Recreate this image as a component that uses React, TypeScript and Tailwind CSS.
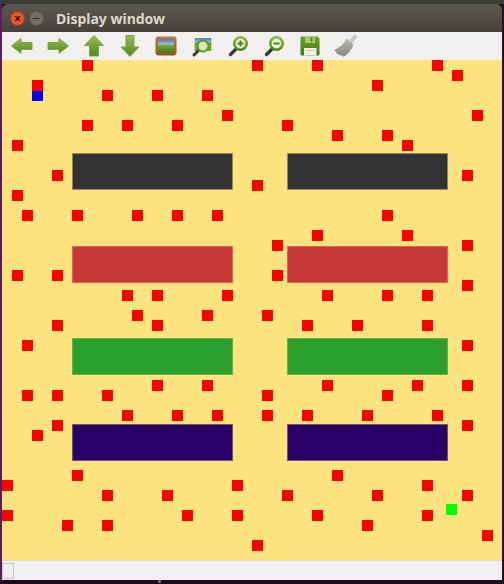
const RED_ROWS: [number, number[]][] = [
  [0, [80, 250, 310, 430]],
  [10, [450]],
  [20, [30, 370]],
  [30, [100, 150, 200]],
  [50, [220, 470]],
  [60, [80, 120, 170, 280]],
  [70, [330, 380]],
  [80, [10, 400]],
  [110, [50, 460]],
  [120, [250]],
  [130, [10]],
  [150, [20, 70, 130, 170, 210, 380]],
  [170, [310, 400]],
  [180, [270, 460]],
  [210, [10, 50, 270]],
  [220, [460]],
  [230, [120, 150, 220, 320, 380, 420]],
  [250, [130, 200, 260]],
  [260, [50, 150, 300, 350, 420]],
  [280, [20, 460]],
  [320, [150, 200, 320, 410, 460]],
  [330, [20, 50, 100, 260, 380]],
  [350, [120, 170, 210, 260, 300, 360, 430]],
  [360, [50, 460]],
  [370, [30]],
  [410, [70, 330]],
  [420, [0, 230, 420]],
  [430, [100, 160, 280, 370, 460]],
  [450, [0, 180, 230, 310, 420]],
  [460, [60, 100, 360]],
  [470, [480]],
  [480, [250]],
];

const BARS = [
  { top: "mt-[93px]", color: "bg-[#333333] border-[#8f8a62]" },
  { top: "mt-[56px]", color: "bg-[#c83737] border-[#d9694f]" },
  { top: "mt-[55px]", color: "bg-[#2ca02c] border-[#6cb048]" },
  { top: "mt-[49px]", color: "bg-[#2a0066] border-[#6a5a72]" },
];

const Grad = ({ id, from, to }: { id: string; from: string; to: string }) => (
  <defs>
    <linearGradient id={id} x1="0" y1="0" x2="0" y2="1">
      <stop offset="0" stopColor={from} />
      <stop offset="1" stopColor={to} />
    </linearGradient>
  </defs>
);

const Arrow = ({ id, d }: { id: string; d: string }) => (
  <svg width="24" height="24" viewBox="0 0 24 24">
    <Grad id={id} from="#9cba5c" to="#4f8a10" />
    <path d={d} fill={`url(#${id})`} stroke="#7ba545" strokeWidth="1" strokeLinejoin="round" />
  </svg>
);

const Magnifier = ({ id, sign }: { id: string; sign: "plus" | "minus" }) => (
  <svg width="24" height="24" viewBox="0 0 24 24">
    <Grad id={id} from="#8db544" to="#4f8a10" />
    <path d="M10 15 L4.5 20.5" stroke="#3a3a3a" strokeWidth="3.4" strokeLinecap="round" />
    <circle cx="14.5" cy="9.5" r="6.2" fill="#e6edd8" stroke={`url(#${id})`} strokeWidth="2.6" />
    <path
      d={sign === "plus" ? "M11.5 9.5h6M14.5 6.5v6" : "M11.5 9.5h6"}
      stroke="#4f8a10"
      strokeWidth="2"
    />
  </svg>
);

const PictureIcon = () => (
  <svg width="24" height="24" viewBox="0 0 24 24">
    <Grad id="frame" from="#c07a3c" to="#96561f" />
    <Grad id="sky" from="#3f7fc4" to="#b8d4e8" />
    <Grad id="land" from="#7fb03c" to="#3f7a14" />
    <rect x="1.5" y="2.5" width="21" height="19" rx="3" fill="url(#frame)" />
    <rect x="4" y="5.5" width="16" height="6" fill="url(#sky)" />
    <rect x="4" y="10.5" width="16" height="8" fill="url(#land)" />
  </svg>
);

const PictureZoomIcon = () => (
  <svg width="24" height="24" viewBox="0 0 24 24">
    <Grad id="sky2" from="#3f7fc4" to="#a8cce0" />
    <rect x="3" y="2.5" width="20" height="16" fill="#ffffff" stroke="#e4e4e0" strokeWidth="0.6" />
    <rect x="4.5" y="4" width="17" height="5" fill="url(#sky2)" />
    <rect x="4.5" y="8.5" width="17" height="8.5" fill="#6fa534" />
    <path d="M9 16 L4 21" stroke="#3a3a3a" strokeWidth="3" strokeLinecap="round" />
    <circle cx="13" cy="12" r="5.5" fill="#d3e6bb" stroke="#5d9420" strokeWidth="2" />
  </svg>
);

const SaveIcon = () => (
  <svg width="24" height="24" viewBox="0 0 24 24">
    <Grad id="disk" from="#6ea32a" to="#3f7a10" />
    <path d="M3 2.5h16.5l2 2V20a1.5 1.5 0 0 1-1.5 1.5H4A1.5 1.5 0 0 1 2.5 20V3z" fill="url(#disk)" />
    <rect x="7" y="2.5" width="10" height="6.5" fill="#a9c97a" />
    <rect x="12.5" y="3.5" width="2" height="4" fill="#4f8a10" />
    <rect x="6" y="14" width="12.5" height="7.5" fill="#f1f1ec" />
    <path d="M7.5 16.5h9.5" stroke="#c9c9c4" strokeWidth="1" />
  </svg>
);

const BroomIcon = () => (
  <svg width="24" height="24" viewBox="0 0 24 24">
    <Grad id="bristle" from="#b8b8b4" to="#85857f" />
    <path d="M15 6.5 L20.5 0.5 L23.5 2.5 L18.5 9.5 Z" fill="#c6c6c2" />
    <path d="M12.5 4.5 L19.5 10.5 C18 16 13 21 9.5 23 L8 21 L6.5 22 L5 20 L3.5 20.5 L0.5 16 C6 13.5 10 9.5 12.5 4.5 Z" fill="url(#bristle)" />
  </svg>
);

const TOOLS = [
  <Arrow key="back" id="a1" d="M1.5 12 L11 4.5 V8.5 H22 V15.5 H11 V19.5 Z" />,
  <Arrow key="forward" id="a2" d="M22.5 12 L13 4.5 V8.5 H2 V15.5 H13 V19.5 Z" />,
  <Arrow key="up" id="a3" d="M12 1.5 L21.5 11.5 H16.5 V22 H7.5 V11.5 H2.5 Z" />,
  <Arrow key="down" id="a4" d="M12 22.5 L21 13 H16 V1.5 H8 V13 H3 Z" />,
  <PictureIcon key="picture" />,
  <PictureZoomIcon key="picture-zoom" />,
  <Magnifier key="zoom-in" id="m1" sign="plus" />,
  <Magnifier key="zoom-out" id="m2" sign="minus" />,
  <SaveIcon key="save" />,
  <BroomIcon key="clear" />,
];

const App = () => {
  return (
    <div className="flex flex-col w-[504px] h-[584px] overflow-hidden bg-[#1f0a20] font-['Noto_Sans',sans-serif]">
      <div className="h-1 bg-[#3d3c37]" />
      <div className="flex flex-1">
        <div className="w-0.5 bg-[#5c1f5e]" />
        <div className="flex flex-col w-[500px]">
          <div className="flex items-center h-7 pt-px rounded-t-md bg-gradient-to-b from-[#5c5a50] to-[#444239]">
            <div className="flex items-center justify-center w-[15px] h-[15px] ml-2 rounded-full bg-[#e9552c] border border-[#a83c1c] text-[#2e150a] text-[12px] leading-none font-bold">
              ×
            </div>
            <div className="flex items-center justify-center w-[15px] h-[15px] ml-1 rounded-full bg-[#716f67] border border-[#57554d]">
              <div className="w-[7px] h-px bg-[#33322d]" />
            </div>
            <span className="ml-3 text-sm font-bold text-[#dcd8cd]">Display window</span>
          </div>

          <div className="flex items-center h-7 pl-0.5 bg-[#f1f0ee]">
            {TOOLS.map((icon, i) => (
              <div key={i} className="flex items-center justify-center w-9 h-7">
                {icon}
              </div>
            ))}
          </div>

          <div className="relative h-[500px] bg-[#ffe37e]">
            <div className="grid grid-cols-[161px_161px] gap-x-[54px] ml-[70px]">
              {BARS.map((bar, row) => (
                <div key={row} className="contents">
                  <div className={`h-[37px] border ${bar.top} ${bar.color}`} />
                  <div className={`h-[37px] border ${bar.top} ${bar.color}`} />
                </div>
              ))}
            </div>
            <div className="absolute w-[11px] h-[11px] bg-[#0000ff]" style={{ left: 30, top: 30 }} />
            {RED_ROWS.flatMap(([top, xs]) =>
              xs.map((left) => (
                <div
                  key={`${left}-${top}`}
                  className="absolute w-[11px] h-[11px] bg-[#ff0000]"
                  style={{ left, top }}
                />
              )),
            )}
            <div className="absolute w-[11px] h-[11px] bg-[#00ff00]" style={{ left: 444, top: 444 }} />
          </div>

          <div className="flex items-center h-5 border-t border-[#dcdad8] bg-[#f1f0ee]">
            <div className="w-3 h-4 border border-[#c8c8c6] bg-[#f1f0ee]" />
          </div>
        </div>
        <div className="w-0.5 bg-[#2a0c2a]" />
      </div>
      <div className="h-1 bg-[#1f0a20]">
        <div className="w-[3px] h-[3px] ml-[158px] bg-[#6a6a78]" />
      </div>
    </div>
  );
};

export default App;
